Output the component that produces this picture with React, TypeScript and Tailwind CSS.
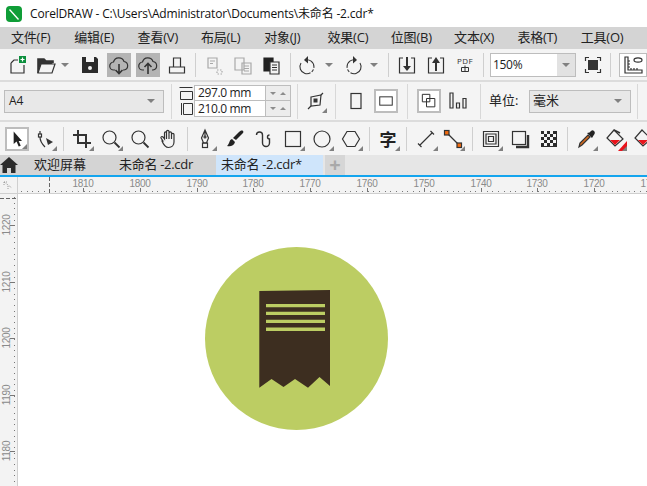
import type { ReactNode } from 'react';

const D = '#333333';

function Ico({ children }: { children: ReactNode }) {
  return (
    <svg viewBox="0 0 24 24" width="24" height="24" fill="none" stroke={D} strokeWidth="1.2" className="block">
      {children}
    </svg>
  );
}

function Tool({ ml, corner, boxed, down, children }: { ml: string; corner?: boolean; boxed?: boolean; down?: boolean; children: ReactNode }) {
  return (
    <div
      className={`relative flex h-6 w-6 shrink-0 items-center justify-center ${ml} ${boxed ? 'border-2 border-[#bdbdbd] bg-white' : ''} ${down ? 'bg-[#b4b4b4]' : ''}`}
    >
      {children}
      {corner && <span className="absolute right-0 bottom-0 h-0 w-0 border-b-[5px] border-l-[5px] border-b-[#808080] border-l-transparent" />}
    </div>
  );
}

function Sep({ ml }: { ml: string }) {
  return <div className={`h-6 w-px shrink-0 bg-[#cfcfcf] ${ml}`} />;
}

function Drop({ ml }: { ml: string }) {
  return <span className={`h-0 w-0 shrink-0 border-x-4 border-t-[4px] border-x-transparent border-t-[#808080] ${ml}`} />;
}

function Menu() {
  const items = ['文件(F)', '编辑(E)', '查看(V)', '布局(L)', '对象(J)', '效果(C)', '位图(B)', '文本(X)', '表格(T)', '工具(O)'];
  return (
    <div className="flex h-[22px] items-center bg-[#d4d4d4] pl-[11px] text-[13px] text-[#222]">
      {items.map((m) => (
        <span key={m} className="w-[63.3px] shrink-0 whitespace-nowrap tracking-[-0.2px]">
          {m}
        </span>
      ))}
    </div>
  );
}

function TopToolbar() {
  return (
    <div className="flex h-[33px] items-center overflow-hidden border-b-2 border-[#dcdcdc] bg-[#f4f4f4]">
      <Tool ml="ml-1">
        <Ico>
          <path d="M7 10l3-3h4M7 10v10h13v-8" />
          <rect x="15" y="3" width="7" height="7" fill="#0a8f3c" stroke="none" />
          <path d="M18.5 4.5v4M16.5 6.5h4" stroke="#fff" />
        </Ico>
      </Tool>
      <Tool ml="ml-[5px]">
        <Ico>
          <path d="M5 20V6h6l2 2h7v2" strokeWidth="1.6" fill="#333" />
          <path d="M5 20l3-9h14l-3 9z" fill="#f4f4f4" />
        </Ico>
      </Tool>
      <Drop ml="ml-1" />
      <Tool ml="ml-[9px]">
        <Ico>
          <path d="M4 4h14l2 2v14H4z" fill="#2b2b2b" stroke="none" />
          <rect x="8" y="4" width="8" height="5" fill="#f4f4f4" stroke="none" />
          <circle cx="12" cy="15" r="2" fill="#f4f4f4" stroke="none" />
        </Ico>
      </Tool>
      <Tool ml="ml-[5px]" down>
        <Ico>
          <path d="M8 17H7a4 4 0 0 1-.5-8A5.5 5.5 0 0 1 17 8.500a4.300 4.300 0 0 1 0 8.500h-1" />
          <path d="M12 11v9M8.500 17l3.500 3.500 3.500-3.500" strokeWidth="1.6" />
        </Ico>
      </Tool>
      <Tool ml="ml-[5px]" down>
        <Ico>
          <path d="M8 17H7a4 4 0 0 1-.5-8A5.500 5.500 0 0 1 17 8.500a4.300 4.300 0 0 1 0 8.500h-1" />
          <path d="M12 21v-10M8.500 14l3.500-3.500 3.500 3.500" strokeWidth="1.6" />
        </Ico>
      </Tool>
      <Tool ml="ml-[5px]">
        <Ico>
          <path d="M8.500 14V5h7v9M4.500 14h15v6h-15z" />
        </Ico>
      </Tool>
      <Sep ml="ml-1.5" />
      <Tool ml="ml-1.5">
        <Ico>
          <g stroke="#a8a8a8">
            <path d="M6 5h9v10H6zM8 8h5M8 10.500h3" />
            <path d="M15 17h5v4h-5z" strokeDasharray="1.500 1.500" />
          </g>
        </Ico>
      </Tool>
      <Tool ml="ml-[5px]">
        <Ico>
          <g stroke="#a8a8a8">
            <path d="M4 5h9v12H4zM11 10h9v11h-9zM13 13h5M13 15.500h5M13 18h5" />
          </g>
        </Ico>
      </Tool>
      <Tool ml="ml-1">
        <Ico>
          <path d="M5 5h9v13H5z" fill="#222" stroke="#222" />
          <path d="M11 9h9v12h-9z" fill="#f4f4f4" />
          <path d="M13 12h5M13 14.500h5M13 17h5" />
        </Ico>
      </Tool>
      <Sep ml="ml-[7px]" />
      <Tool ml="ml-[5px]">
        <Ico>
          <path d="M9 7a7 7 0 1 1-4 3" strokeWidth="1.100" strokeDasharray="14 1.500 3 1.500 30" />
          <path d="M12 3L8 7l4 3.500z" fill="#333" stroke="none" />
        </Ico>
      </Tool>
      <Drop ml="ml-[5px]" />
      <Tool ml="ml-2">
        <Ico>
          <path d="M15 7a7 7 0 1 0 4 3" strokeWidth="1.100" strokeDasharray="14 1.500 3 1.500 30" />
          <path d="M12 3l4 4-4 3.500z" fill="#333" stroke="none" />
        </Ico>
      </Tool>
      <Drop ml="ml-[5px]" />
      <Sep ml="ml-2.5" />
      <Tool ml="ml-1.5">
        <Ico>
          <path d="M8 5H4.500v15h15V5H16" />
          <path d="M12 4v12" strokeWidth="2" />
          <path d="M8 13h8l-4 5z" fill="#333" stroke="none" />
        </Ico>
      </Tool>
      <Tool ml="ml-[5px]">
        <Ico>
          <path d="M8 5H4.500v15h15V5H16" />
          <path d="M12 8v10" strokeWidth="2" />
          <path d="M8 10h8l-4-6z" fill="#333" stroke="none" />
        </Ico>
      </Tool>
      <Tool ml="ml-[5px]">
        <div className="flex flex-col items-center leading-none text-[#333]">
          <span className="text-[8px] tracking-[0.5px]">PDF</span>
          <svg viewBox="0 0 8 7" width="8" height="7" fill="none" stroke={D}>
            <path d="M.5 2.500h7v4h-7zM4 .5v6" />
          </svg>
        </div>
      </Tool>
      <Sep ml="ml-1.5" />
      <div className="ml-1.5 flex h-6 w-[86px] shrink-0 items-center border border-[#bdbdbd] bg-white">
        <span className="flex-1 pl-0.5 text-[12px] tracking-[-0.3px] text-[#222]">150%</span>
        <span className="flex h-full w-[18px] items-center justify-center bg-[#e2e2e2]">
          <Drop ml="ml-0" />
        </span>
      </div>
      <Tool ml="ml-[5px]">
        <Ico>
          <rect x="7" y="7" width="10" height="10" fill="#333" stroke="none" />
          <path d="M8 4.500H4.500V8M16 4.500h3.500V8M8 19.500H4.500V16M16 19.500h3.500V16" />
        </Ico>
      </Tool>
      <Sep ml="ml-[5px]" />
      <div className="ml-2 flex h-6 w-[28px] shrink-0 items-center justify-center border border-[#bdbdbd] bg-white">
        <Ico>
          <path d="M4 4h3v13h14v3H4z" />
          <path d="M7 14h2M7 11h2M7 8h2M10 17v-2M13 17v-2M16 17v-2" />
          <ellipse cx="17" cy="7" rx="4" ry="2.200" />
        </Ico>
      </div>
    </div>
  );
}

function Spin() {
  return (
    <span className="flex h-full w-[25px] items-center justify-around border-l border-[#bdbdbd] bg-[#ececec] px-0.5">
      <span className="h-0 w-0 border-x-[3px] border-t-[3px] border-x-transparent border-t-[#8c8c8c]" />
      <span className="h-0 w-0 border-x-[3px] border-b-[3px] border-x-transparent border-b-[#8c8c8c]" />
    </span>
  );
}

function PropertyBar() {
  return (
    <div className="flex h-[40px] items-center overflow-hidden border-b-2 border-[#dcdcdc] bg-[#f4f4f4]">
      <div className="ml-1 flex h-[23px] w-[160px] shrink-0 items-center justify-between border border-[#bdbdbd] bg-[#e8e8e8] pr-2 pl-1 text-[12px] text-[#222]">
        A4
        <Drop ml="ml-0" />
      </div>
      <div className="ml-[7px] h-[35px] w-px shrink-0 bg-[#d8d8d8]" />
      <div className="ml-[6px] flex h-[32px] w-[16px] shrink-0 flex-col">
        <svg viewBox="0 0 16 32" width="16" height="32" fill="none" stroke={D}>
          <path d="M1.500 2.500h13M2.500 6.500h12v8h-12zM3.500 18v12M5.500 18.500h9v11h-9z" />
        </svg>
      </div>
      <div className="flex h-[32px] w-[97px] shrink-0 flex-col border border-[#bdbdbd] text-[12px] tracking-[-0.35px] text-[#222]">
        <div className="flex h-1/2 items-center border-b border-[#bdbdbd] bg-white">
          <span className="flex-1 pl-[3px]">297.0 mm</span>
          <Spin />
        </div>
        <div className="flex h-1/2 items-center bg-white">
          <span className="flex-1 pl-[3px]">210.0 mm</span>
          <Spin />
        </div>
      </div>
      <div className="ml-1.5 h-[35px] w-px shrink-0 bg-[#d8d8d8]" />
      <Tool ml="ml-[5px]" corner>
        <Ico>
          <path d="M8 8l10-2-1 10-9 1z" />
          <rect x="10.500" y="9.500" width="4" height="4" fill="#333" stroke="none" />
          <path d="M8 17l-3 3M18 6l2-2" />
        </Ico>
      </Tool>
      <div className="ml-2 h-[35px] w-px shrink-0 bg-[#d8d8d8]" />
      <Tool ml="ml-2">
        <Ico>
          <rect x="7" y="4.500" width="10" height="15" />
        </Ico>
      </Tool>
      <Tool ml="ml-1.5" boxed>
        <Ico>
          <rect x="4.500" y="7" width="15" height="10" />
        </Ico>
      </Tool>
      <div className="ml-[9px] h-[35px] w-px shrink-0 bg-[#d8d8d8]" />
      <Tool ml="ml-[9px]" boxed>
        <Ico>
          <path d="M4 4h9v9H4zM9 9h10v10H9z" />
        </Ico>
      </Tool>
      <Tool ml="ml-[5px]">
        <Ico>
          <path d="M4 4h3v15H4zM10.500 14h3v5h-3zM17 9.500h3V19h-3z" />
        </Ico>
      </Tool>
      <div className="ml-2.5 h-[35px] w-px shrink-0 bg-[#d8d8d8]" />
      <span className="ml-2 w-[40px] shrink-0 text-[13px] whitespace-nowrap text-[#222]">单位:</span>
      <div className="flex h-[23px] w-[102px] shrink-0 items-center justify-between border border-[#bdbdbd] bg-[#e8e8e8] pr-2 pl-[3px] text-[13px] text-[#222]">
        毫米
        <Drop ml="ml-0" />
      </div>
      <div className="ml-1.5 h-[35px] w-px shrink-0 bg-[#d8d8d8]" />
    </div>
  );
}

function ToolBox() {
  return (
    <div className="flex h-[33px] items-center overflow-hidden bg-[#f4f4f4] pt-px">
      <Tool ml="ml-[5px]" corner boxed>
        <svg viewBox="0 0 24 24" width="20" height="20">
          <path d="M8 3v15l3.500-3 2.500 6 2.500-1-2.500-5.500H18z" fill="#222" />
        </svg>
      </Tool>
      <Tool ml="ml-1" corner>
        <Ico>
          <path d="M7 4v6c0 4 2 7 5 10" />
          <rect x="5.500" y="7" width="3" height="3" fill="#f4f4f4" />
          <path d="M13 11l7 4-5 3z" fill="#333" stroke="none" />
        </Ico>
      </Tool>
      <Sep ml="ml-1.5" />
      <Tool ml="ml-1.5" corner>
        <Ico>
          <path d="M8 3v13h13M3 8h13v13" strokeWidth="2" />
        </Ico>
      </Tool>
      <Tool ml="ml-[5px]" corner>
        <Ico>
          <circle cx="10.500" cy="10.500" r="6.500" />
          <path d="M15.500 15.500l5 5" strokeWidth="1.800" />
        </Ico>
      </Tool>
      <Tool ml="ml-[5px]">
        <Ico>
          <circle cx="10.500" cy="10.500" r="6.500" />
          <path d="M15.500 15.500l5 5" strokeWidth="1.800" />
        </Ico>
      </Tool>
      <Tool ml="ml-[5px]">
        <Ico>
          <path d="M6 14l-2-3c-.5-1 1-2 2-1l1.500 2V6c0-1.500 2-1.500 2 0V4.500c0-1.500 2.500-1.500 2.500 0V6c0-1.500 2.500-1.500 2.500 0v1.500c0-1.500 2.500-1.500 2.500 0V15c0 3-2 5.500-5.500 5.500-3 0-4.500-1.500-6.500-6.500zM9.500 6v6M12 5v7M14.500 6v6" />
        </Ico>
      </Tool>
      <Sep ml="ml-1.5" />
      <Tool ml="ml-[5px]" corner>
        <Ico>
          <path d="M12 3l3.500 8-2 5h-3l-2-5zM12 3v6" />
          <circle cx="12" cy="10" r="1" />
          <rect x="9.500" y="16" width="5" height="4.500" />
        </Ico>
      </Tool>
      <Tool ml="ml-1.5">
        <Ico>
          <path d="M20 4c1 1 0 2-1 3l-6 6-3-2 6-6c1-1 3-2 4-1z" fill="#222" stroke="none" />
          <path d="M9 12c-3 1-2 4-5 7 3 1 7 0 8-4z" fill="#222" stroke="none" />
        </Ico>
      </Tool>
      <Tool ml="ml-[5px]">
        <Ico>
          <path d="M4.500 8a3 3 0 0 1 6 0v8a3.500 3.500 0 0 0 7 0v-4a2 2 0 0 1 0-4" strokeWidth="1.400" />
        </Ico>
      </Tool>
      <Tool ml="ml-[5px]" corner>
        <Ico>
          <rect x="4.500" y="4.500" width="15" height="15" />
        </Ico>
      </Tool>
      <Tool ml="ml-[5px]" corner>
        <Ico>
          <circle cx="12" cy="12" r="8" />
        </Ico>
      </Tool>
      <Tool ml="ml-[5px]" corner>
        <Ico>
          <path d="M8 4.500h8l4.500 7.500-4.500 7.500H8L3.500 12z" />
        </Ico>
      </Tool>
      <Sep ml="ml-1.5" />
      <Tool ml="ml-1.5" corner>
        <span className="text-[17px] leading-none font-bold text-[#222]">字</span>
      </Tool>
      <Sep ml="ml-1.5" />
      <Tool ml="ml-[7px]" corner>
        <Ico>
          <path d="M6 18L18 6M4 16.500l3.500 3.500M16.500 4l3.500 3.500" />
        </Ico>
      </Tool>
      <Tool ml="ml-[3px]" corner>
        <Ico>
          <path d="M7 7l10 10" />
          <rect x="3.500" y="3.500" width="4.500" height="4.500" fill="#f26b0f" stroke="#333" />
          <rect x="16" y="16" width="4.500" height="4.500" fill="#f26b0f" stroke="#333" />
        </Ico>
      </Tool>
      <Sep ml="ml-[7px]" />
      <Tool ml="ml-1.5" corner>
        <Ico>
          <path d="M4.500 4.500h15v15h-15zM7 7h10v10H7zM9.500 9.500h5v5h-5z" />
        </Ico>
      </Tool>
      <Tool ml="ml-[5px]">
        <Ico>
          <rect x="4.500" y="4.500" width="13" height="13" />
          <path d="M20 8v12H8" strokeWidth="2.400" />
        </Ico>
      </Tool>
      <Tool ml="ml-[5px]">
        <svg viewBox="0 0 16 16" width="16" height="16" shapeRendering="crispEdges">
          <rect width="16" height="16" fill="#2b2b2b" />
          <path d="M3 0h3v3H3zM9 0h3v3H9zM0 3h3v3H0zM6 3h3v3H6zM12 3h3v3h-3zM3 6h3v3H3zM9 6h3v3H9zM0 9h3v3H0zM6 9h3v3H6zM12 9h3v3h-3zM3 12h3v3H3zM9 12h3v3H9z" fill="#f4f4f4" />
        </svg>
      </Tool>
      <Sep ml="ml-1.5" />
      <Tool ml="ml-1.5" corner>
        <Ico>
          <path d="M5 20l1-4 8-8 2 2-8 8z" fill="#d2691e" stroke="#333" />
          <path d="M13 6l5 5 1.500-2.500 1-1.500c.5-1 .5-2-.5-3s-2-1-3 0l-1.500 1.500z" fill="#222" stroke="none" />
        </Ico>
      </Tool>
      <Tool ml="ml-[5px]" corner>
        <Ico>
          <path d="M11 3l9 9-8 7-8-8z" />
          <path d="M7 13h10l-5 5z" fill="#e8141c" stroke="none" />
          <path d="M11 3l6 3" strokeWidth="1.600" />
          <path d="M24 14v10H15z" fill="#e8141c" stroke="none" />
        </Ico>
      </Tool>
      <Tool ml="ml-1">
        <Ico>
          <path d="M11 3l9 9-8 7-8-8z" />
          <path d="M7 13h10l-5 5z" fill="#e8141c" stroke="none" />
        </Ico>
      </Tool>
    </div>
  );
}

function Tabs() {
  return (
    <div className="flex h-[22px] border-b-2 border-[#14a5ee] bg-[#e6e6e6] text-[13px] text-[#222]">
      <div className="flex w-[216px] shrink-0 items-center bg-[#d4d4d4]">
        <svg viewBox="0 0 18 16" width="18" height="16" className="shrink-0">
          <path d="M9 0l9 8h-2.500v8H11v-5H7v5H2.500V8H0z" fill="#2b2b2b" />
        </svg>
        <span className="ml-4 w-[85px] shrink-0">欢迎屏幕</span>
        <span className="whitespace-nowrap tracking-[-0.3px]">未命名 -2.cdr</span>
      </div>
      <div className="flex w-[107px] shrink-0 items-center bg-[#cfe5fb] pl-[5px] tracking-[-0.3px] whitespace-nowrap">未命名 -2.cdr*</div>
      <div className="ml-0.5 flex w-5 shrink-0 items-center justify-center bg-[#d6d6d6] text-[20px] leading-none font-bold text-[#a9a9a9]">
        +
      </div>
    </div>
  );
}

const H_LABELS = [1810, 1800, 1790, 1780, 1770, 1760, 1750, 1740, 1730, 1720, 1710];
const V_LABELS = [1220, 1210, 1200, 1190, 1180];
const RULER_FONT = 'Liberation Sans, sans-serif';

function TopRuler() {
  const dots = Array.from({ length: 120 }, (_, i) => 4 + i * 5.68);
  return (
    <svg width="647" height="17" viewBox="0 177 647 17" className="block bg-[#f3f3f3]">
      <path d="M0 193.500H647" stroke="#cfcfcf" />
      <path d="M17.500 177V194" stroke="#cfcfcf" />
      <path d="M4 182l8 6M4 182h4M4 182v4" stroke="#9a9a9a" strokeDasharray="1 1" fill="none" />
      <path d="M8 186v4" stroke="#9a9a9a" strokeDasharray="1 1" />
      {dots
        .filter((x) => x > 19)
        .map((x) => (
          <rect key={x} x={Math.round(x)} y={191} width="1" height="1" fill="#777" />
        ))}
      {H_LABELS.map((v, i) => {
        const x = Math.round(83 + i * 56.8);
        return (
          <g key={v}>
            <rect x={x} y={188} width="1" height="4" fill="#777" />
            <text x={x} y={187} textAnchor="middle" fontSize="10" letterSpacing="-0.3" fill="#8a8a8a" fontFamily={RULER_FONT}>
              {v}
            </text>
          </g>
        );
      })}
      <path d="M49.500 177V193" stroke="#666" strokeDasharray="4 2" />
    </svg>
  );
}

function LeftRuler() {
  const dots = Array.from({ length: 56 }, (_, i) => 197 + i * 5.68);
  return (
    <svg width="18" height="292" viewBox="0 194 18 292" className="block shrink-0 bg-[#f3f3f3]">
      <path d="M17.500 194V486" stroke="#cfcfcf" />
      {dots.map((y) => (
        <rect key={y} x={14} y={Math.round(y)} width="1" height="1" fill="#777" />
      ))}
      {V_LABELS.map((v, i) => {
        const y = Math.round(225 + i * 56.5);
        return (
          <g key={v}>
            <rect x={10} y={y} width="5" height="1" fill="#777" />
            <text
              x={9.5}
              y={y}
              transform={`rotate(-90 9.5 ${y})`}
              textAnchor="middle"
              fontSize="10"
              letterSpacing="-0.3"
              fill="#8a8a8a"
              fontFamily={RULER_FONT}
            >
              {v}
            </text>
          </g>
        );
      })}
      <path d="M0 198.500H17" stroke="#666" strokeDasharray="4 2" />
    </svg>
  );
}

function Badge() {
  return (
    <svg viewBox="205 247 183 183" width="183" height="183" className="mt-[53px] ml-[187px] block">
      <circle cx="296.500" cy="338.500" r="91.500" fill="#bccd63" />
      <path
        d="M259.300 291L330 290V386L319.500 377 308 387.700 295 379 283.500 387 271.500 379 259.300 387.700z"
        fill="#3d2e20"
      />
      <path d="M266 304h59v3.300h-59zM266 311.800h59v3.300h-59zM266 319.800h59v3.300h-59zM266 327.600h59v3.300h-59z" fill="#bccd63" />
    </svg>
  );
}

export default function App() {
  return (
    <div className="flex h-[486px] w-[647px] flex-col overflow-hidden bg-white font-['Open_Sans','Noto_Sans_CJK_SC',sans-serif]">
      <div className="flex h-[27px] items-center bg-white pl-1.5 text-[12px] tracking-[-0.18px] whitespace-nowrap text-[#111]">
        <svg viewBox="0 0 16 16" width="16" height="16" className="shrink-0">
          <rect width="16" height="16" rx="4" fill="#0f9d37" />
          <path d="M4 3l9 10-1 1L3 4z" fill="#fff" />
        </svg>
        <span className="ml-2">CorelDRAW - C:\Users\Administrator\Documents\未命名 -2.cdr*</span>
      </div>
      <Menu />
      <TopToolbar />
      <PropertyBar />
      <ToolBox />
      <Tabs />
      <TopRuler />
      <div className="flex flex-1">
        <LeftRuler />
        <div className="flex-1 bg-white">
          <Badge />
        </div>
      </div>
    </div>
  );
}
